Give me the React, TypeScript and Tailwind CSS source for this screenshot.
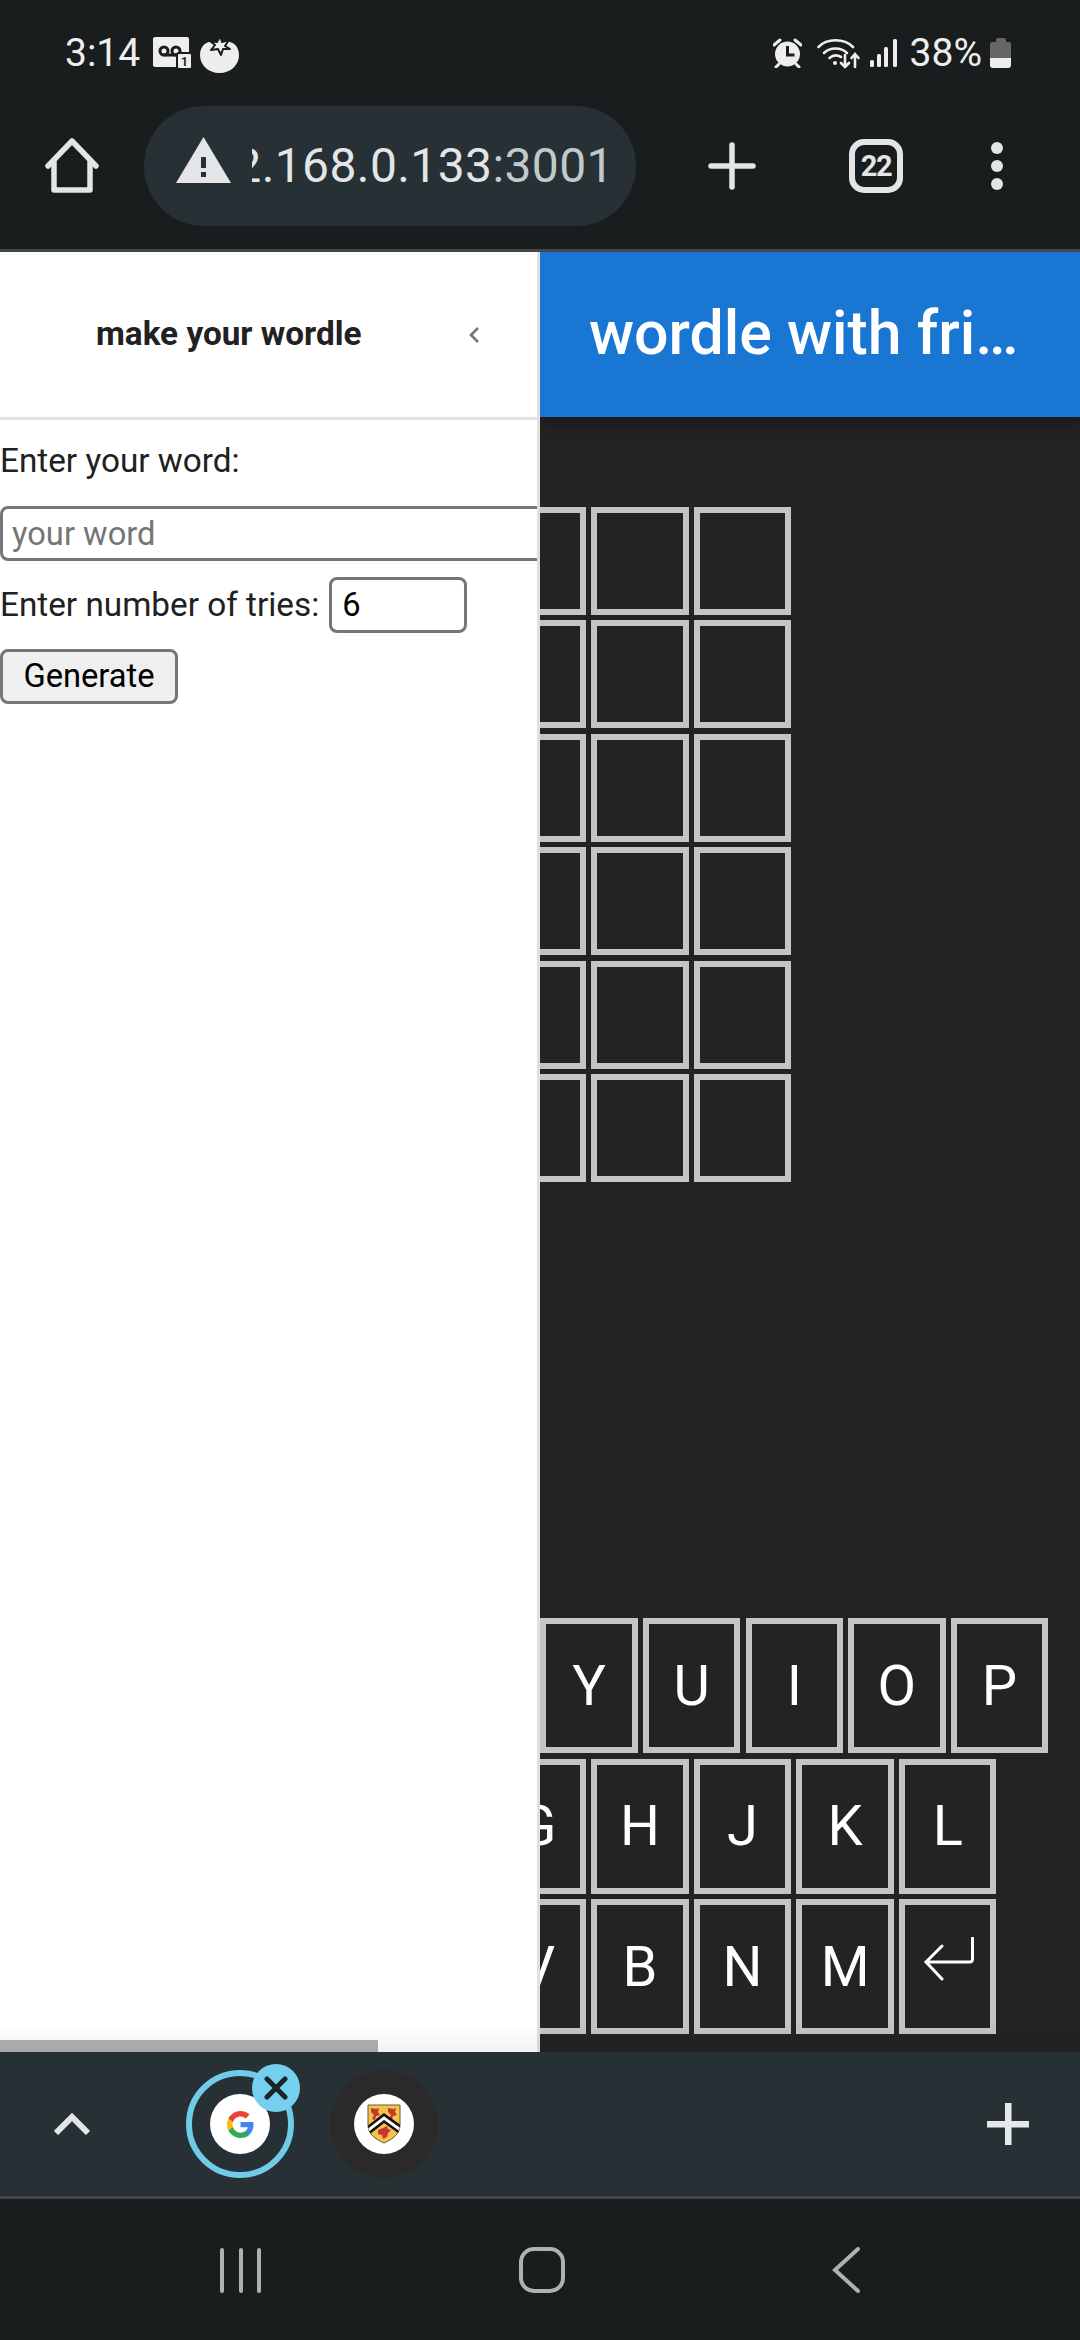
import React from "react";

const Key = ({ label, children }: { label?: string; children?: React.ReactNode }) => (
  <div className="w-[97.4px] h-[135px] shrink-0 border-[6px] border-[#c4c4c4] flex items-center justify-center text-[56px] leading-none text-white">
    {label}
    {children}
  </div>
);

const Cell = () => <div className="w-[97.4px] h-[108px] shrink-0 border-[6px] border-[#c4c4c4]" />;

const BoardRow = () => (
  <div className="flex gap-[5.2px] ml-[-51.3px]">
    <Cell />
    <Cell />
    <Cell />
  </div>
);

const Enter = () => (
  <svg width="52" height="44" viewBox="0 0 52 44" fill="none" className="mb-[16px] ml-[2px]" stroke="#fff" strokeWidth="3" strokeLinecap="round" strokeLinejoin="round">
    <path d="M49.5 1v21q0 3-3 3H3" />
    <path d="M19 9L3 25l16 17" />
  </svg>
);

export default function App() {
  return (
    <div className="relative w-[1080px] h-[2340px] flex flex-col overflow-hidden bg-[#191d1e] font-[Roboto,sans-serif]">
      {/* status bar */}
      <div className="h-[106px] shrink-0 flex items-center text-[#eeeeee]">
        <span className="ml-[65px] text-[39px] leading-none">3:14</span>
        <svg className="ml-[13px]" width="39" height="32" viewBox="0 0 39 32">
          <rect x="0" y="0" width="36" height="30" rx="2" fill="#eee" />
          <circle cx="11" cy="14" r="4" fill="none" stroke="#191d1e" strokeWidth="3" />
          <circle cx="23" cy="14" r="4" fill="none" stroke="#191d1e" strokeWidth="3" />
          <path d="M11 18h12" stroke="#191d1e" strokeWidth="3" />
          <rect x="24" y="16" width="15" height="16" rx="2" fill="#eee" stroke="#191d1e" strokeWidth="2" />
          <text x="31.5" y="29" textAnchor="middle" fontSize="12" fontWeight="700" fill="#191d1e" fontFamily="Roboto">1</text>
        </svg>
        <svg className="ml-[8px] mt-[2px]" width="39" height="38" viewBox="0 0 39 38">
          <path d="M19.5 7C30 4 39 9 39 20c0 10-8 18-19.5 18S0 30 0 20C0 9 9 4 19.5 7z" fill="#eee" />
          <path d="M20 1l2 6 7-2-4 6 5 3-7 0-2 6-3-6-7 1 4-5-5-4 7 1z" fill="#eee" stroke="#191d1e" strokeWidth="2" strokeLinejoin="round" />
        </svg>
        <svg className="ml-auto" width="29" height="30" viewBox="0 0 29 30">
          <circle cx="14.5" cy="16" r="12.5" fill="#eee" />
          <path d="M14.5 8v9h7" fill="none" stroke="#191d1e" strokeWidth="3" />
          <path d="M1 7l6-5M28 7l-6-5M3 29l3-3M26 29l-3-3" stroke="#eee" strokeWidth="3" strokeLinecap="round" />
        </svg>
        <svg className="ml-[15px]" width="43" height="32" viewBox="0 0 43 32" fill="none" stroke="#eee" strokeLinecap="round">
          <path d="M1.5 10C10 1 27 1 36 10" strokeWidth="2.6" />
          <path d="M7 16c6-6 17-6 23 0" strokeWidth="2.6" />
          <path d="M12.5 21c3.5-3 8-3 11.5-1" strokeWidth="2.6" />
          <circle cx="18" cy="26" r="2" fill="#eee" stroke="none" />
          <path d="M28 18v12M24 26l4 4 4-4" strokeWidth="2.6" />
          <path d="M38 30V17M34.5 21l3.5-4 3.5 4" strokeWidth="2.6" />
        </svg>
        <svg className="ml-[10px]" width="27" height="28" viewBox="0 0 27 28" fill="#eee">
          <rect x="0" y="21" width="4" height="7" rx="1.5" />
          <rect x="7" y="15" width="4" height="13" rx="1.5" />
          <rect x="14" y="8" width="4" height="20" rx="1.5" />
          <rect x="23" y="0" width="4" height="28" rx="1.5" />
        </svg>
        <span className="ml-[13px] text-[39px] leading-none">38%</span>
        <div className="ml-[8px] mr-[69px] w-[21px] h-[30px] flex flex-col items-center">
          <div className="w-[10px] h-[4px] rounded-t-[2px] bg-[#666666]" />
          <div className="w-[21px] h-[16px] bg-[#666666] rounded-t-[2px]" />
          <div className="w-[21px] h-[10px] bg-[#eeeeee] rounded-b-[3px]" />
        </div>
      </div>

      {/* toolbar */}
      <div className="h-[143px] shrink-0 flex items-start text-[#e3e5e6]">
        <svg className="ml-[45px] mt-[32px]" width="54" height="55" viewBox="0 0 54 55" fill="none" stroke="#e3e5e6" strokeWidth="5.5" strokeLinejoin="round" strokeLinecap="round">
          <path d="M3 28L27 3l24 25" />
          <path d="M9 24v28h36V24" />
        </svg>
        <div className="ml-[45px] w-[492px] h-[120px] rounded-full bg-[#263035] flex items-center">
          <svg className="ml-[32px] mt-[-12px] shrink-0" width="55" height="46" viewBox="0 0 55 46">
            <path d="M27.5 0L55 46H0z" fill="#e3e5e6" />
            <rect x="25" y="20" width="5" height="11" fill="#263035" />
            <rect x="25" y="35" width="5" height="5" fill="#263035" />
          </svg>
          <div className="ml-[21px] w-[362px] overflow-hidden flex justify-end whitespace-nowrap text-[48px] leading-none tracking-[0.4px]">
            <span className="shrink-0">
              <span className="text-[#e3e5e6]">192.168.0.133</span>
              <span className="text-[#c3c9cb]">:3001</span>
            </span>
          </div>
        </div>
        <svg className="ml-[72px] mt-[36px]" width="48" height="48" viewBox="0 0 48 48" stroke="#e3e5e6" strokeWidth="5.5" strokeLinecap="round">
          <path d="M24 3v42M3 24h42" />
        </svg>
        <div className="ml-[93px] mt-[33px] w-[54px] h-[54px] rounded-[15px] border-[6px] border-[#e3e5e6] flex items-center justify-center text-[29px] font-bold leading-none tracking-[-1.5px]">
          22
        </div>
        <div className="ml-[88px] mt-[36px] flex flex-col gap-[6px]">
          <div className="w-[12px] h-[12px] rounded-full bg-[#e3e5e6]" />
          <div className="w-[12px] h-[12px] rounded-full bg-[#e3e5e6]" />
          <div className="w-[12px] h-[12px] rounded-full bg-[#e3e5e6]" />
        </div>
      </div>
      <div className="h-[3px] shrink-0 bg-[#41494c]" />

      {/* page */}
      <div className="relative h-[1800px] shrink-0 flex">
        <aside className="relative w-[540px] shrink-0 bg-white border-r-[3px] border-[#e0e0e0] overflow-hidden flex flex-col">
          <div className="h-[165px] shrink-0 flex items-center">
            <h2 className="ml-[96px] mb-[2px] text-[33.3px] font-bold leading-none text-[#212121]">make your wordle</h2>
            <svg className="ml-[107px]" width="12" height="18" viewBox="0 0 12 18" fill="none" stroke="#757575" strokeWidth="2.6">
              <path d="M10 2L3 9l7 7" />
            </svg>
          </div>
          <div className="h-[3px] shrink-0 bg-[#e0e0e0]" />
          <div className="mt-[21px] text-[33.3px] leading-[40px] text-[#212121]">Enter your word:</div>
          <input
            readOnly
            placeholder="your word"
            className="mt-[25px] w-[700px] h-[55px] shrink-0 border-[3px] border-[#767676] rounded-[8px] pl-[9px] text-[32.7px] bg-white placeholder:text-[#757575] outline-none"
          />
          <div className="mt-[16px] flex items-center text-[33.3px] text-[#212121]">
            <span>Enter number of tries:</span>
            <input
              readOnly
              value="6"
              className="ml-[10px] w-[138px] h-[56px] border-[3px] border-[#767676] rounded-[8px] pl-[10px] text-[32.7px] text-black bg-white outline-none"
            />
          </div>
          <button className="mt-[16px] w-[178px] h-[55px] border-[3px] border-[#767676] rounded-[8px] bg-[#efefef] text-[32.7px] text-black leading-none">
            Generate
          </button>
          <div className="absolute left-0 bottom-0 w-[378px] h-[12px] bg-[#b0b0b0]" />
        </aside>
        <main className="flex-1 min-w-0 overflow-hidden bg-[#232323] flex flex-col">
          <header className="relative z-10 h-[165px] shrink-0 bg-[#1976d2] flex items-center pl-[49px] shadow-[0_6px_14px_rgba(0,0,0,0.3)]">
            <h1 className="w-[440px] mb-[2px] truncate text-[60.8px] font-medium leading-[70px] text-white">wordle with friends</h1>
          </header>
          <div className="mt-[90px] flex flex-col gap-[5.4px]">
            <BoardRow />
            <BoardRow />
            <BoardRow />
            <BoardRow />
            <BoardRow />
            <BoardRow />
          </div>
          <div className="mt-auto mb-[18px] flex flex-col gap-[5.5px]">
            <div className="flex gap-[5.2px] ml-[0.4px]">
              <Key label="Y" />
              <Key label="U" />
              <Key label="I" />
              <Key label="O" />
              <Key label="P" />
            </div>
            <div className="flex gap-[5.2px] ml-[-51.3px]">
              <Key label="G" />
              <Key label="H" />
              <Key label="J" />
              <Key label="K" />
              <Key label="L" />
            </div>
            <div className="flex gap-[5.2px] ml-[-51.3px]">
              <Key label="V" />
              <Key label="B" />
              <Key label="N" />
              <Key label="M" />
              <Key>
                <Enter />
              </Key>
            </div>
          </div>
        </main>
        <div className="absolute left-0 right-0 bottom-0 h-[30px] bg-linear-to-t from-black/5 to-transparent pointer-events-none" />
      </div>

      {/* tab group bar */}
      <div className="relative h-[144px] shrink-0 bg-[#263035] flex items-center">
        <svg className="ml-[54px]" width="36" height="22" viewBox="0 0 36 22" fill="none" stroke="#e3e5e6" strokeWidth="6">
          <path d="M2 20L18 4l16 16" />
        </svg>
        <div className="relative ml-[96px] w-[108px] h-[108px] rounded-full border-[6px] border-[#6fcbe8] flex items-center justify-center">
          <div className="w-[60px] h-[60px] rounded-full bg-white flex items-center justify-center">
            <svg width="27" height="27" viewBox="1 1 22 22">
              <path d="M22.56 12.25c0-.78-.07-1.53-.2-2.25H12v4.26h5.92c-.26 1.37-1.04 2.53-2.21 3.31v2.77h3.57c2.08-1.92 3.28-4.74 3.28-8.09z" fill="#4285F4" />
              <path d="M12 23c2.97 0 5.46-.98 7.28-2.66l-3.57-2.77c-.98.66-2.23 1.06-3.71 1.06-2.86 0-5.29-1.93-6.16-4.53H2.18v2.84C3.99 20.53 7.7 23 12 23z" fill="#34A853" />
              <path d="M5.84 14.09c-.22-.66-.35-1.36-.35-2.09s.13-1.43.35-2.09V7.07H2.18C1.43 8.55 1 10.22 1 12s.43 3.45 1.18 4.93l2.85-2.22.81-.62z" fill="#FBBC05" />
              <path d="M12 5.38c1.62 0 3.06.56 4.21 1.64l3.15-3.15C17.45 2.09 14.97 1 12 1 7.7 1 3.99 3.47 2.18 7.07l3.66 2.84c.87-2.6 3.3-4.53 6.16-4.53z" fill="#EA4335" />
            </svg>
          </div>
          <div className="absolute left-[60px] top-[-12px] w-[48px] h-[48px] rounded-full bg-[#74d0ee] flex items-center justify-center">
            <svg width="24" height="24" viewBox="0 0 24 24" stroke="#1a2327" strokeWidth="5" strokeLinecap="round">
              <path d="M3 3l18 18M21 3L3 21" />
            </svg>
          </div>
        </div>
        <div className="ml-[36px] w-[108px] h-[108px] rounded-full bg-[#2a2a2a] flex items-center justify-center">
          <div className="w-[60px] h-[60px] rounded-full bg-white flex items-center justify-center">
            <svg width="34" height="40" viewBox="0 0 34 40">
              <defs>
                <clipPath id="shield">
                  <path d="M1 1h32v20c0 9-7 14-16 18C8 35 1 30 1 21z" />
                </clipPath>
              </defs>
              <path d="M1 1h32v20c0 9-7 14-16 18C8 35 1 30 1 21z" fill="#f4c24f" stroke="#6b5a2a" strokeWidth="1" />
              <g fill="#c8372f" clipPath="url(#shield)">
                <path d="M4 4l5 1 3-1-1 4 2 3-4 1-1 4-3-1 2-4-3-3zM21 4l5 1 3-1-1 4 2 3-4 1-1 4-3-1 2-4-3-3z" />
                <path d="M11 26l5-2 4-2 1 3 3 1-3 3-1 4-4 2-1-4-4-1z" />
              </g>
              <g clipPath="url(#shield)" fill="none">
                <path d="M-1 28L17 14l18 13" stroke="#111" strokeWidth="8" />
                <path d="M-1 28L17 14l18 13" stroke="#fff" strokeWidth="3" />
              </g>
            </svg>
          </div>
        </div>
        <svg className="absolute left-[987px] top-[51px]" width="42" height="42" viewBox="0 0 42 42" fill="#e6e9ea">
          <rect x="18" y="0" width="6.5" height="42" />
          <rect x="0" y="18" width="42" height="6.5" />
        </svg>
      </div>
      <div className="h-[3px] shrink-0 bg-[#41494c]" />

      {/* nav bar */}
      <div className="flex-1 flex items-start">
        <div className="ml-[220px] mt-[49px] flex gap-[14.5px]">
          <div className="w-[4px] h-[45px] rounded-full bg-[#b0b2b2]" />
          <div className="w-[4px] h-[45px] rounded-full bg-[#b0b2b2]" />
          <div className="w-[4px] h-[45px] rounded-full bg-[#b0b2b2]" />
        </div>
        <div className="ml-[258px] mt-[48px] w-[46px] h-[46px] rounded-[15px] border-[4px] border-[#b0b2b2]" />
        <svg className="ml-[267px] mt-[48px]" width="28" height="46" viewBox="0 0 28 46" fill="none" stroke="#b0b2b2" strokeWidth="4" strokeLinecap="round">
          <path d="M26 2L3 23l23 21" />
        </svg>
      </div>
    </div>
  );
}
